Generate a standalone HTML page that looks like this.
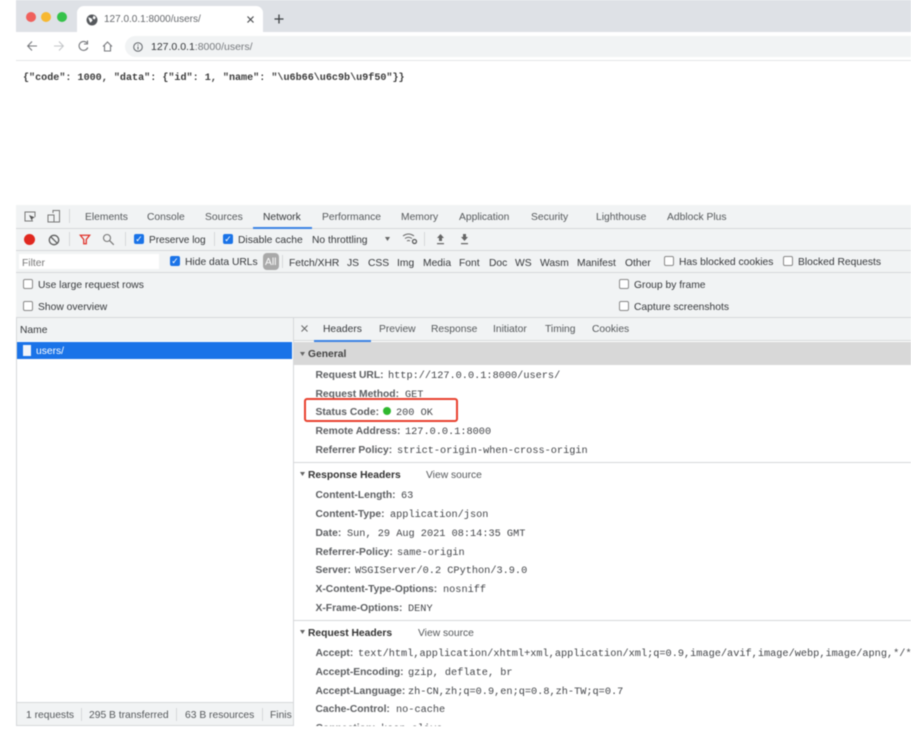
<!DOCTYPE html>
<html><head><meta charset="utf-8">
<style>
html,body{margin:0;padding:0;background:#fff}
#p{position:relative;width:911px;height:734px;overflow:hidden;background:#fff;font-family:"Liberation Sans",sans-serif;filter:blur(.5px)}
#p div,#p span,#p svg{position:absolute}
.t{white-space:nowrap;font-size:10.3px;line-height:14px;color:#55585b;margin-top:1px}
.d{color:#36383b}
.m{font-family:"Liberation Mono",monospace;font-size:10.25px;color:#44464a;margin-top:1.5px}
.k{white-space:nowrap;font-size:10.3px;line-height:14px;color:#5c5e61;font-weight:bold;margin-top:1.5px;margin-left:-.5px}
.b{background:#d6d8da}
.c{width:8px;height:8px;border:1px solid #8a8a8a;border-radius:2px;background:#fff}
.cc{width:10px;height:10px;border-radius:2px;background:#1a73e8;color:#fff;font-size:9px;line-height:10px;text-align:center}
.h{white-space:nowrap;font-size:10.3px;line-height:14px;color:#333;font-weight:bold;margin-top:1.5px}
</style></head><body><div id="p">
<!-- tab strip -->
<div style="left:16px;top:0;width:895px;height:32px;background:#dee1e6"></div>
<div style="left:77px;top:6px;width:186px;height:26px;background:#fff;border-radius:7px 7px 0 0"></div>
<div style="left:26px;top:12px;width:10px;height:10px;border-radius:50%;background:#f0605c"></div>
<div style="left:41px;top:12px;width:10px;height:10px;border-radius:50%;background:#f7b830"></div>
<div style="left:57px;top:12px;width:10px;height:10px;border-radius:50%;background:#35c24a"></div>
<svg style="left:86px;top:14px" width="12" height="12" viewBox="0 0 11 11"><circle cx="5.500" cy="5.500" r="5" fill="#55585c"/><path d="M2 3l3 1 1 2-2 2-1-2zM7 1.500l2 1.500-1 2-2-1z" fill="#fff"/></svg>
<span class="t" style="left:104px;top:12px;color:#66696d;font-size:10px">127.0.0.1:8000/users/</span>
<svg style="left:246px;top:15px" width="9" height="9" viewBox="0 0 9 9"><path d="M1.500 1.500l6 6M7.500 1.500l-6 6" stroke="#4a4c50" stroke-width="1.200"/></svg>
<svg style="left:274px;top:14px" width="10" height="10" viewBox="0 0 10 10"><path d="M5 .5v9M.5 5h9" stroke="#3c4043" stroke-width="1.300"/></svg>
<!-- nav bar -->
<svg style="left:26px;top:39px" width="90" height="14" viewBox="0 0 90 14" fill="none"><path d="M11 7H2M6 2.500L1.700 7 6 11.500" stroke="#77797d" stroke-width="1.100"/><path d="M28 7h9M33 2.500L37.300 7 33 11.500" stroke="#c4c6c9" stroke-width="1.100"/><path d="M61 4a4.500 4.500 0 1 0 .8 4.500M61.500 1.500V5H58" stroke="#77797d" stroke-width="1.100"/><path d="M77 7.500L81.500 3 86 7.500M78.500 6.500V12h6V6.500" stroke="#77797d" stroke-width="1.100"/></svg>
<div style="left:125px;top:36px;width:786px;height:21px;background:#f1f3f4;border-radius:11px 0 0 11px"></div>
<svg style="left:133px;top:42px" width="10" height="10" viewBox="0 0 10 10" fill="none"><circle cx="5" cy="5" r="4.300" stroke="#5f6368"/><path d="M5 4.500V7.500M5 2.500v1" stroke="#5f6368"/></svg>
<span class="t" style="left:151px;top:39px;font-size:10.500px;color:#777a7e"><b style="font-weight:normal;color:#35373a">127.0.0.1</b>:8000/users/</span>
<div style="left:16px;top:60px;width:895px;height:1px;background:#e4e5e7"></div>
<span class="m t" style="left:23px;top:70.500px;font-size:10.100px;color:#3a3a3a;font-weight:bold">{"code": 1000, "data": {"id": 1, "name": "\u6b66\u6c9b\u9f50"}}</span>
<!-- devtools -->
<div style="left:16px;top:205px;width:895px;height:113px;background:#f1f3f4"></div>
<div class="b" style="left:16px;top:228px;width:895px;height:1px"></div>
<div class="b" style="left:16px;top:250px;width:895px;height:1px"></div>
<div class="b" style="left:16px;top:272px;width:895px;height:1px"></div>
<div class="b" style="left:16px;top:317px;width:895px;height:1px"></div>
<svg style="left:23px;top:209px" width="40" height="16" viewBox="0 0 40 16" fill="none"><path d="M10 12H2V3h10v5" stroke="#777" stroke-width="1"/><path d="M6 6l6 2.500-2.300.8L9 12z" fill="#555"/><path d="M30 4V1.500h6.500V13H30" stroke="#777"/><rect x="25" y="6" width="6" height="7" stroke="#777"/></svg>
<div class="b" style="left:69px;top:209px;width:1px;height:14px"></div>
<span class="t" style="left:85px;top:210px">Elements</span>
<span class="t" style="left:147px;top:210px">Console</span>
<span class="t" style="left:205px;top:210px">Sources</span>
<span class="t d" style="left:263px;top:210px">Network</span>
<div style="left:253px;top:227px;width:59px;height:2px;background:#3b82e4"></div>
<span class="t" style="left:322px;top:210px">Performance</span>
<span class="t" style="left:401px;top:210px">Memory</span>
<span class="t" style="left:459px;top:210px">Application</span>
<span class="t" style="left:531px;top:210px">Security</span>
<span class="t" style="left:596px;top:210px">Lighthouse</span>
<span class="t" style="left:667px;top:210px">Adblock Plus</span>
<!-- row 2 -->
<div style="left:24px;top:234px;width:11px;height:11px;border-radius:50%;background:#e0281f"></div>
<svg style="left:48px;top:234px" width="12" height="12" viewBox="0 0 12 12" fill="none"><circle cx="6" cy="6" r="4.700" stroke="#5f5f5f" stroke-width="1.300"/><path d="M2.700 2.700l6.600 6.600" stroke="#5f5f5f" stroke-width="1.300"/></svg>
<div class="b" style="left:69px;top:232px;width:1px;height:14px"></div>
<svg style="left:79px;top:234px" width="12" height="11" viewBox="0 0 14 13" fill="none"><path d="M1.500 1.500h11L8.500 6.500v5h-3v-5z" stroke="#e0322a" stroke-width="1.500"/></svg>
<svg style="left:102px;top:233px" width="13" height="13" viewBox="0 0 13 13" fill="none"><circle cx="5" cy="5" r="3.500" stroke="#777" stroke-width="1.100"/><path d="M7.800 7.800l4 4" stroke="#777" stroke-width="1.200"/></svg>
<div class="b" style="left:125px;top:232px;width:1px;height:14px"></div>
<div class="cc" style="left:134px;top:234px">✓</div>
<span class="t d" style="left:149px;top:233px;font-size:10.100px">Preserve log</span>
<div class="b" style="left:214px;top:232px;width:1px;height:14px"></div>
<div class="cc" style="left:223px;top:234px">✓</div>
<span class="t d" style="left:238px;top:233px">Disable cache</span>
<span class="t d" style="left:312px;top:233px">No throttling</span>
<svg style="left:385px;top:237px" width="5" height="4"><path d="M0 0h5L2.500 4z" fill="#666"/></svg>
<svg style="left:402px;top:232px" width="16" height="13" viewBox="0 0 16 13" fill="none"><path d="M1 4q5.500-4 11 0M3 6.500q3.500-2.500 7 0M5 9q1.500-1 3 0" stroke="#666"/><circle cx="12.500" cy="9.500" r="2" stroke="#555" stroke-width="1.200"/></svg>
<div class="b" style="left:424px;top:232px;width:1px;height:14px"></div>
<svg style="left:436px;top:234px" width="9" height="11" viewBox="0 0 9 11"><path d="M4.500 0L8 4H6v3H3V4H1zM1 9h7v1.200H1z" fill="#666"/></svg>
<svg style="left:460px;top:234px" width="9" height="11" viewBox="0 0 9 11"><path d="M4.500 7L8 3H6V0H3v3H1zM1 9h7v1.200H1z" fill="#666"/></svg>
<!-- row 3 -->
<div style="left:19px;top:254px;width:140px;height:15px;background:#fff"></div>
<span class="t" style="left:22px;top:256px;color:#777">Filter</span>
<div class="cc" style="left:170px;top:256px">✓</div>
<span class="t d" style="left:185px;top:255px">Hide data URLs</span>
<div style="left:263px;top:253px;width:16px;height:17px;border-radius:4px;background:#a9a9a9"></div>
<span class="t" style="left:265px;top:255px;color:#fff">All</span>
<div class="b" style="left:282px;top:255px;width:1px;height:13px"></div>
<span class="t d" style="left:289px;top:256px">Fetch/XHR</span>
<span class="t d" style="left:347px;top:256px">JS</span>
<span class="t d" style="left:368px;top:256px">CSS</span>
<span class="t d" style="left:397px;top:256px">Img</span>
<span class="t d" style="left:423px;top:256px">Media</span>
<span class="t d" style="left:459px;top:256px">Font</span>
<span class="t d" style="left:489px;top:256px">Doc</span>
<span class="t d" style="left:515px;top:256px">WS</span>
<span class="t d" style="left:540px;top:256px">Wasm</span>
<span class="t d" style="left:577px;top:256px">Manifest</span>
<span class="t d" style="left:625px;top:256px">Other</span>
<div class="c" style="left:664px;top:256px"></div>
<span class="t d" style="left:679px;top:255px">Has blocked cookies</span>
<div class="c" style="left:783px;top:256px"></div>
<span class="t d" style="left:798px;top:255px">Blocked Requests</span>
<!-- row 4 -->
<div class="c" style="left:23px;top:279px"></div>
<span class="t d" style="left:38px;top:277.500px">Use large request rows</span>
<div class="c" style="left:619px;top:279px"></div>
<span class="t d" style="left:634px;top:277.500px">Group by frame</span>
<div class="c" style="left:23px;top:301px"></div>
<span class="t d" style="left:38px;top:299.500px">Show overview</span>
<div class="c" style="left:619px;top:301px"></div>
<span class="t d" style="left:634px;top:299.500px">Capture screenshots</span>
<!-- left pane -->
<div class="b" style="left:16px;top:318px;width:1px;height:407px"></div>
<div style="left:17px;top:318px;width:276px;height:23px;background:#f1f3f4"></div>
<span class="t d" style="left:20px;top:322.500px">Name</span>
<div style="left:17px;top:342px;width:275px;height:17px;background:#1a73e8"></div>
<div style="left:23px;top:345px;width:8px;height:11px;background:#f2f5fa"></div>
<span class="t" style="left:36px;top:343.500px;color:#fff">users/</span>
<div style="left:17px;top:703px;width:276px;height:22px;background:#f1f3f4"></div>
<div class="b" style="left:17px;top:702px;width:276px;height:1px"></div>
<div class="b" style="left:16px;top:725px;width:278px;height:1px"></div>
<span class="t" style="left:26px;top:707.500px">1 requests</span>
<div class="b" style="left:81px;top:708px;width:1px;height:13px"></div>
<span class="t" style="left:89px;top:707.500px">295 B transferred</span>
<div class="b" style="left:176px;top:708px;width:1px;height:13px"></div>
<span class="t" style="left:185px;top:707.500px">63 B resources</span>
<div class="b" style="left:262px;top:708px;width:1px;height:13px"></div>
<span class="t" style="left:270px;top:707.500px">Finis</span>
<div class="b" style="left:293px;top:318px;width:1px;height:408px"></div>
<!-- right pane -->
<div style="left:294px;top:318px;width:617px;height:23px;background:#f1f3f4"></div>
<div class="b" style="left:294px;top:340px;width:617px;height:1px"></div>
<svg style="left:301px;top:325px" width="7" height="7"><path d="M.5.5l6 6M6.500.5l-6 6" stroke="#666"/></svg>
<span class="t d" style="left:323px;top:322px">Headers</span>
<div style="left:314px;top:340px;width:57px;height:2px;background:#3b82e4"></div>
<span class="t" style="left:379px;top:322px">Preview</span>
<span class="t" style="left:431px;top:322px">Response</span>
<span class="t" style="left:493px;top:322px">Initiator</span>
<span class="t" style="left:545px;top:322px">Timing</span>
<span class="t" style="left:592px;top:322px">Cookies</span>
<div style="left:294px;top:342px;width:617px;height:23px;background:#d8d8d8"></div>
<svg style="left:300px;top:352px" width="5" height="4"><path d="M0 0h5L2.500 4z" fill="#666"/></svg>
<span class="h" style="left:308px;top:346.500px;color:#444">General</span>
<span class="k" style="left:316px;top:367px">Request URL:</span><span class="t m" style="left:388px;top:367px">http://127.0.0.1:8000/users/</span>
<span class="k" style="left:316px;top:386px">Request Method:</span><span class="t m" style="left:405px;top:386px">GET</span>
<span class="k" style="left:316px;top:404px">Status Code:</span>
<div style="left:383px;top:407px;width:8px;height:8px;border-radius:50%;background:#2fb82f"></div>
<span class="t m" style="left:396px;top:404px">200  OK</span>
<span class="k" style="left:316px;top:423px">Remote Address:</span><span class="t m" style="left:405px;top:423px">127.0.0.1:8000</span>
<span class="k" style="left:316px;top:442px">Referrer Policy:</span><span class="t m" style="left:397px;top:442px">strict-origin-when-cross-origin</span>
<div style="left:303.500px;top:397.500px;width:150px;height:20px;border:2px solid #e8412e;border-radius:3px"></div>
<div class="b" style="left:294px;top:462px;width:617px;height:1px"></div>
<svg style="left:300px;top:472px" width="5" height="4"><path d="M0 0h5L2.500 4z" fill="#666"/></svg>
<span class="h" style="left:308px;top:467px">Response Headers</span>
<span class="t" style="left:426px;top:467.500px">View source</span>
<span class="k" style="left:316px;top:487px">Content-Length:</span><span class="t m" style="left:401px;top:487px">63</span>
<span class="k" style="left:316px;top:506px">Content-Type:</span><span class="t m" style="left:390px;top:506px">application/json</span>
<span class="k" style="left:316px;top:525px">Date:</span><span class="t m" style="left:347px;top:525px">Sun, 29 Aug 2021 08:14:35 GMT</span>
<span class="k" style="left:316px;top:544px">Referrer-Policy:</span><span class="t m" style="left:397px;top:544px">same-origin</span>
<span class="k" style="left:316px;top:562px">Server:</span><span class="t m" style="left:355px;top:562px">WSGIServer/0.2 CPython/3.9.0</span>
<span class="k" style="left:316px;top:581px">X-Content-Type-Options:</span><span class="t m" style="left:443px;top:581px">nosniff</span>
<span class="k" style="left:316px;top:600px">X-Frame-Options:</span><span class="t m" style="left:408px;top:600px">DENY</span>
<div class="b" style="left:294px;top:620px;width:617px;height:1px"></div>
<svg style="left:300px;top:630px" width="5" height="4"><path d="M0 0h5L2.500 4z" fill="#666"/></svg>
<span class="h" style="left:308px;top:625px">Request Headers</span>
<span class="t" style="left:418px;top:625.500px">View source</span>
<span class="k" style="left:316px;top:645px">Accept:</span><span class="t m" style="left:358px;top:645px">text/html,application/xhtml+xml,application/xml;q=0.9,image/avif,image/webp,image/apng,*/*</span>
<span class="k" style="left:316px;top:664px">Accept-Encoding:</span><span class="t m" style="left:408px;top:664px">gzip, deflate, br</span>
<span class="k" style="left:316px;top:683px">Accept-Language:</span><span class="t m" style="left:408px;top:683px">zh-CN,zh;q=0.9,en;q=0.8,zh-TW;q=0.7</span>
<span class="k" style="left:316px;top:701px">Cache-Control:</span><span class="t m" style="left:396px;top:701px">no-cache</span>
<span class="k" style="left:316px;top:720px">Connection:</span><span class="t m" style="left:381px;top:720px">keep-alive</span>
<div style="left:0;top:726px;width:911px;height:8px;background:#fff"></div>
</div></body></html>
